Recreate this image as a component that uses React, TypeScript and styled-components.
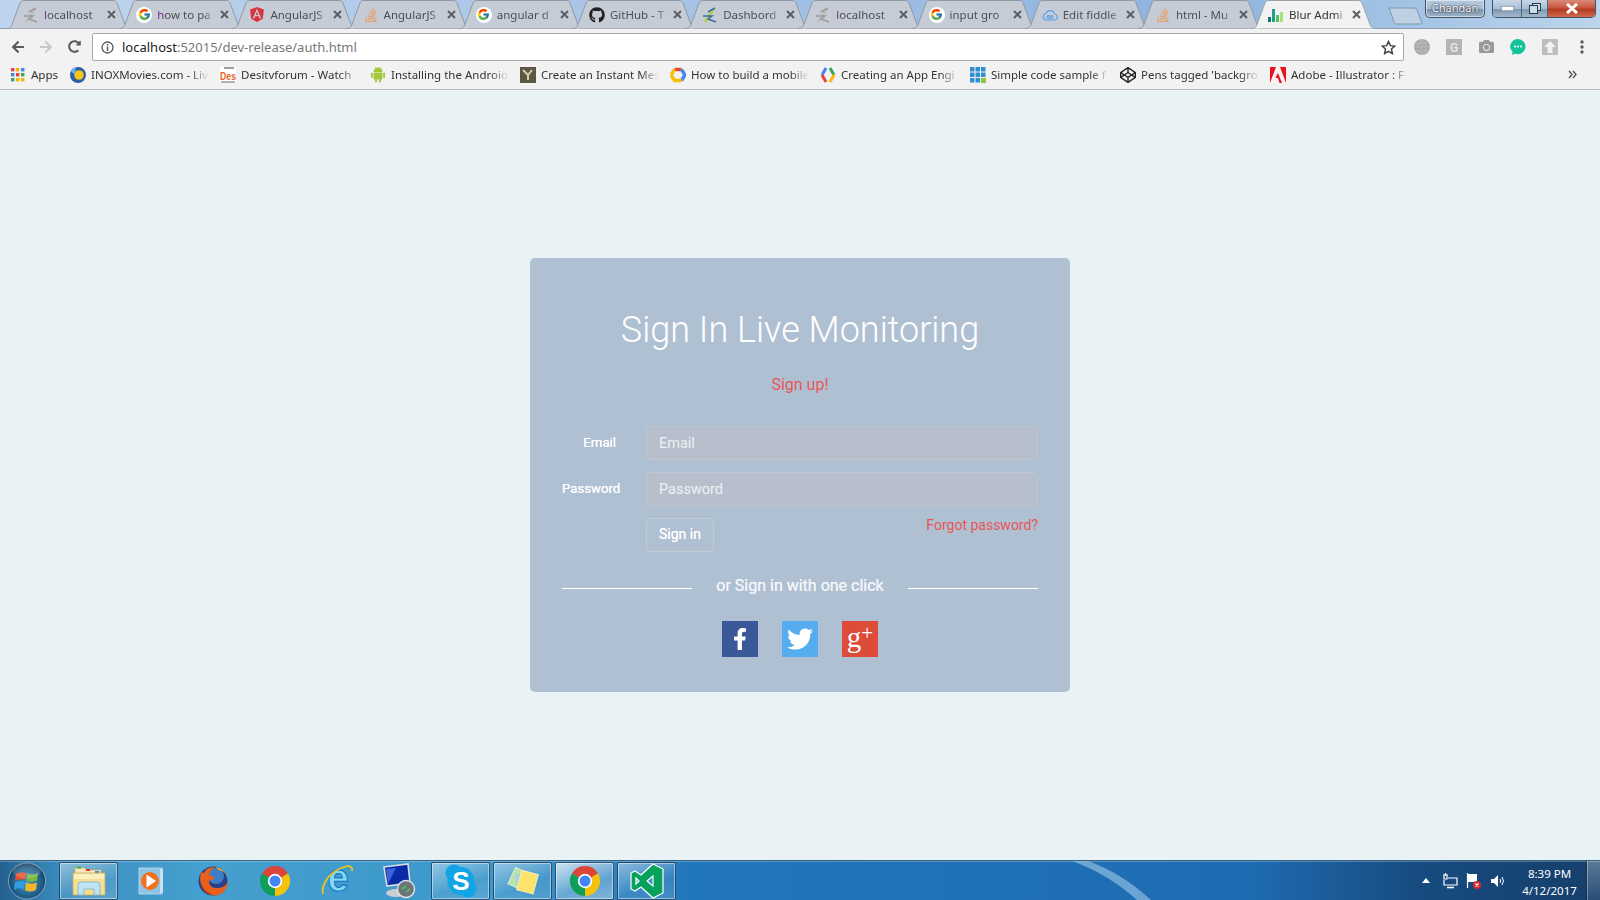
import React from "react";
import styled, { createGlobalStyle } from "styled-components";
import { FcGoogle } from "react-icons/fc";
import {
  FaAngular, FaStackOverflow, FaGithub, FaCodepen, FaFacebookF, FaTwitter,
  FaCamera, FaArrowLeft, FaArrowRight, FaRedoAlt,
} from "react-icons/fa";

const UI = `"Noto Sans", "Open Sans", sans-serif`;
const RB = `Roboto, "Liberation Sans", sans-serif`;

const Global = createGlobalStyle`
  html, body { margin: 0; padding: 0; height: 100%; }
  body { font-family: ${UI}; background: #e9f3f6; overflow: hidden; }
  * { box-sizing: border-box; }
`;

const Page = styled.div`
  width: 1600px; height: 900px; display: flex; flex-direction: column;
`;

/* ---------- browser chrome ---------- */
const TabStrip = styled.div`
  flex: none; display: flex; align-items: flex-start; padding-left: 6px;
  background: linear-gradient(90deg, #bfd4ee 0%, #a5c2e5 45%, #8fb3de 75%, #a7c6e6 90%, #bcd5ec 100%);
  border-bottom: 1px solid #8f9aa6; height: 29px;
`;
const TabBox = styled.div<{ $active?: boolean }>`
  position: relative; width: 125.2px; margin-right: -12px; height: 29px; flex: none;
  display: flex; align-items: center; padding: 0 0 0 17px; gap: 5px;
  z-index: ${(p) => (p.$active ? 3 : 1)};
`;
const TabShape = styled.svg`
  position: absolute; left: 0; top: 0; z-index: -1;
`;
const TabTitle = styled.span<{ $tint?: boolean; $active?: boolean }>`
  width: 58px; flex: none; font-size: 11.5px; line-height: 16px; white-space: nowrap; overflow: hidden;
  color: ${(p) => (p.$active ? "#333" : "#4a4f57")};
  -webkit-mask-image: linear-gradient(90deg, #000 80%, transparent 100%);
  mask-image: linear-gradient(90deg, #000 80%, transparent 100%);
  &::first-letter { color: ${(p) => (p.$tint ? "#7a2a8c" : "inherit")}; }
`;
const IconSlot = styled.span`
  width: 16px; height: 16px; flex: none; display: flex; align-items: center; justify-content: center;
`;
const GoogleBadge = styled.span`
  width: 16px; height: 16px; flex: none; border-radius: 50%; background: #fff;
  display: flex; align-items: center; justify-content: center;
`;
const CloseMark = styled.svg`
  flex: none; margin-left: 0;
`;
const NewTab = styled.svg`
  flex: none; margin: 7px 0 0 24px;
`;
const Caption = styled.div`
  margin-left: auto; display: flex; align-items: flex-start; padding-right: 4px; gap: 7px;
`;
const UserChip = styled.div`
  width: 60px; height: 18px; border: 1px solid #3f5468; border-top: none; border-radius: 0 0 5px 5px;
  background: linear-gradient(180deg, #b7c9dc 0%, #a7bdd3 50%, #7d93ab 55%, #9fb4c8 100%);
  box-shadow: inset 0 0 0 1px rgba(255,255,255,.5);
  font-size: 11px; line-height: 15px; text-align: center; color: #fff;
  text-shadow: 0 0 2px #223, 0 0 1px #223;
`;
const WinButtons = styled.div`
  display: flex; height: 18px; border: 1px solid #3f5468; border-top: none; border-radius: 0 0 5px 5px; overflow: hidden;
  box-shadow: inset 0 0 0 1px rgba(255,255,255,.4);
`;
const WinBtn = styled.div<{ $w: number; $red?: boolean }>`
  width: ${(p) => p.$w}px; display: flex; align-items: center; justify-content: center;
  background: ${(p) =>
    p.$red
      ? "linear-gradient(180deg, #d98a78 0%, #c8563f 45%, #b33a24 55%, #cf6a4a 100%)"
      : "linear-gradient(180deg, #c6d6e6 0%, #a9bfd5 50%, #7f97b1 55%, #a3b9cf 100%)"};
  border-right: ${(p) => (p.$red ? "none" : "1px solid #4f667d")};
`;
const Toolbar = styled.div`
  height: 32px; flex: none; display: flex; align-items: flex-start; background: #f2f2f2; padding: 4px 2px 0 4px;
`;
const NavSlot = styled.span<{ $w?: number }>`
  width: ${(p) => p.$w ?? 28}px; height: 27px; flex: none; display: flex; align-items: center; justify-content: center;
`;
const UrlBox = styled.div`
  flex: 1; height: 28px; margin: 0 2px 0 4px; background: #fff; border: 1px solid #a9a9a9; border-radius: 2px;
  display: flex; align-items: center; padding: 0 7px 0 8px; font-size: 13px; color: #222;
`;
const UrlText = styled.span`
  margin-left: 8px; flex: 1; white-space: nowrap;
  em { font-style: normal; color: #777; }
`;
const Bookmarks = styled.div`
  height: 29px; flex: none; display: flex; align-items: center; padding: 0 0 1px 10px; background: #f2f2f2;
  border-bottom: 1px solid #b4b8bc;
`;
const Mark = styled.div<{ $w: number }>`
  width: ${(p) => p.$w}px; flex: none; display: flex; align-items: center; gap: 5px;
`;
const MarkText = styled.span<{ $fade?: boolean }>`
  font-size: 11.5px; color: #333; white-space: nowrap; overflow: hidden;
  width: ${(p) => (p.$fade ? "118px" : "auto")};
  ${(p) => p.$fade && `-webkit-mask-image: linear-gradient(90deg,#000 84%,transparent 100%); mask-image: linear-gradient(90deg,#000 84%,transparent 100%);`}
`;
const More = styled.svg`
  margin-left: auto; margin-right: 23px; flex: none;
`;

/* ---------- login ---------- */
const Main = styled.main`
  flex: 1; display: flex; align-items: center; justify-content: center; background: #e9f3f6;
`;
const Card = styled.section`
  width: 540px; height: 434px; background: #b0c0d3; border-radius: 5px; padding: 50px 32px 0; font-family: ${RB}; color: #fff;
`;
const Title = styled.h1`
  margin: 0; font-size: 36px; line-height: 44px; font-weight: 300; text-align: center; color: #fff;
`;
const SignUp = styled.a`
  display: block; margin-top: 22px; height: 22px; line-height: 22px; font-size: 16px; text-align: center; color: #e85656;
`;
const Form = styled.form`
  margin-top: 30px; display: grid; grid-template-columns: 84px 1fr; row-gap: 12px;
`;
const FieldLabel = styled.label<{ $inset?: number }>`
  font-size: 13.2px; font-weight: 400; line-height: 33px; height: 34px; color: #fff; text-align: right;
  padding-right: ${(p) => p.$inset ?? 27}px; white-space: nowrap; text-shadow: 0 0 .6px #fff;
`;
const Field = styled.input`
  height: 34px; width: 100%; border: 1px solid #c3c6cc; border-radius: 5px; background: #b6bfcb;
  padding: 0 12px; font: 14.5px ${RB}; color: #fff; outline: none;
  &::placeholder { color: #eef1f4; opacity: 1; }
`;
const Empty = styled.span``;
const Actions = styled.div`
  display: flex; justify-content: space-between; align-items: flex-start;
`;
const SignIn = styled.button`
  width: 68px; height: 34px; border: 1px solid #c6ccd3; border-radius: 5px; background: transparent;
  color: #fff; font: 14px ${RB}; padding: 0 0 2px; text-shadow: 0 0 .6px #fff;
`;
const Forgot = styled.a`
  font-size: 14px; line-height: 14px; color: #e85656; margin-top: 0;
`;
const Divider = styled.div`
  margin-top: 24px; height: 24px; display: flex; align-items: center; justify-content: space-between;
  font-size: 16px; color: #f2f5f8; line-height: 20px;
  &::before, &::after { content: ""; width: 130px; height: 1px; background: #fff; }
`;
const DividerText = styled.span`
  margin-top: -5px; text-shadow: 0 0 .6px #fff;
`;
const Socials = styled.div`
  margin-top: 21px; display: flex; justify-content: center; gap: 24px;
`;
const Social = styled.a<{ $bg: string }>`
  width: 36px; height: 36px; background: ${(p) => p.$bg}; display: flex; align-items: center; justify-content: center; color: #fff;
`;
const GPlus = styled.span`
  font: 29px/30px "Liberation Serif", serif; color: #fff; margin-top: -5px;
  sup { font-size: 21px; line-height: 0; vertical-align: 7px; }
`;

/* ---------- taskbar ---------- */
const Taskbar = styled.footer`
  position: relative; height: 40px; flex: none; display: flex; align-items: stretch; overflow: hidden;
  border-top: 1px solid #33617f; box-shadow: inset 0 1px 0 rgba(255,255,255,.25);
  background: linear-gradient(90deg, #24608f 0, #3a8cbe 60px, #45a0cf 200px, #3c97cb 500px, #2276ba 690px, #1e6bb1 1250px, #174b7f 1420px, #163f6b 1600px);
`;
const Streak = styled.svg`
  position: absolute; left: 1060px; top: 0;
`;
const StartSlot = styled.div`
  width: 59px; flex: none; display: flex; align-items: center; padding-left: 7px;
`;
const TaskItems = styled.div`
  display: flex; gap: 3px; padding: 0; align-items: stretch; position: relative;
`;
const TaskItem = styled.div<{ $boxed?: boolean; $active?: boolean }>`
  width: 59px; display: flex; align-items: center; justify-content: center; border-radius: 2px; margin-top: 1px;
  border: 1px solid ${(p) => (p.$boxed ? "rgba(20,50,80,.75)" : "transparent")};
  box-shadow: ${(p) => (p.$boxed ? "inset 0 0 0 1px rgba(255,255,255,.45)" : "none")};
  background: ${(p) =>
    p.$active
      ? "linear-gradient(160deg, rgba(255,255,255,.75), rgba(255,255,255,.25) 60%, rgba(255,255,255,.4))"
      : p.$boxed
      ? "linear-gradient(160deg, rgba(255,255,255,.45), rgba(255,255,255,.08) 60%, rgba(255,255,255,.15))"
      : "none"};
`;
const Tray = styled.div`
  margin-left: auto; display: flex; align-items: center; position: relative;
`;
const TraySlot = styled.span`
  width: 24px; display: flex; justify-content: center; align-items: center;
`;
const Clock = styled.div`
  width: 76px; text-align: center; color: #fff; font-size: 11.5px; line-height: 17px; font-family: "Noto Sans", sans-serif;
  padding: 2px 0 0 3px;
`;
const ShowDesktop = styled.div`
  width: 14px; align-self: stretch; border: 1px solid rgba(10,30,50,.7); border-width: 0 0 0 1px;
  background: linear-gradient(180deg, rgba(255,255,255,.3), rgba(255,255,255,.08));
  box-shadow: inset 1px 0 0 rgba(255,255,255,.35);
`;

/* ---------- drawn icons ---------- */
const Zee = ({ a = "#9a9a9a", b = "#bdbdbd" }: { a?: string; b?: string }) => (
  <svg width="16" height="16" viewBox="0 0 16 16" fill="none">
    <path d="M3 15 L12 2" stroke={b} strokeWidth="2.4" />
    <path d="M1 9 H10 L6 12 L14 15" stroke={a} strokeWidth="1.5" />
    <path d="M6 5 L13 1" stroke={a} strokeWidth="1.5" />
  </svg>
);
const GoogleIcon = () => (
  <GoogleBadge><FcGoogle size={13} /></GoogleBadge>
);
const CloudIcon = () => (
  <svg width="16" height="16" viewBox="0 0 16 16" fill="none" stroke="#5aa3e8" strokeWidth="1.2">
    <path d="M4 13 H12 A3 3 0 0 0 12.6 7 A4.5 4.5 0 0 0 4 6.5 A3.3 3.3 0 0 0 4 13Z" />
    <circle cx="6.4" cy="10" r="1.4" /><circle cx="9.4" cy="10" r="1.4" />
  </svg>
);
const BarsIcon = () => (
  <svg width="16" height="16" viewBox="0 0 16 16">
    <rect x="0" y="10" width="3" height="5" fill="#16756f" /><rect x="4" y="2" width="3" height="13" fill="#209e91" />
    <rect x="8" y="8" width="3" height="7" fill="#59c25a" /><rect x="12" y="5" width="3" height="10" fill="#a6e27a" />
  </svg>
);
const X = () => (
  <CloseMark width="9" height="9" viewBox="0 0 9 9"><path d="M1 1 L8 8 M8 1 L1 8" stroke="#5c6066" strokeWidth="2" /></CloseMark>
);
const AppsIcon = () => {
  const c = ["#e8453c", "#f4b400", "#4285f4", "#4285f4", "#e8453c", "#34a853", "#34a853", "#f4b400", "#f4b400"];
  return (
    <svg width="14" height="14" viewBox="0 0 14 14" style={{ margin: "0 1px" }}>
      {c.map((f, i) => <rect key={i} x={(i % 3) * 5} y={Math.floor(i / 3) * 5} width="3.4" height="3.4" fill={f} />)}
    </svg>
  );
};
const InoxIcon = () => (
  <svg width="16" height="16" viewBox="0 0 16 16"><circle cx="8" cy="8" r="8" fill="#2a5fa8" /><circle cx="9" cy="8" r="4.8" fill="#f5c518" /><path d="M1 4 A8 8 0 0 1 6 .3 L5 8Z" fill="#6bb4e8" /></svg>
);
const DesiIcon = () => (
  <svg width="16" height="16" viewBox="0 0 16 16"><rect width="16" height="16" fill="#fff" /><rect x="4" y="0" width="10" height="2" fill="#9aa0a6" /><rect x="1" y="14" width="14" height="2" fill="#b0b4b8" /><text x="0" y="12.5" fontFamily="Liberation Sans, sans-serif" fontWeight="700" fontSize="11.5" textLength="16" lengthAdjust="spacingAndGlyphs" fill="#e8622c">Des</text></svg>
);
const InstantIcon = () => (
  <svg width="16" height="16" viewBox="0 0 16 16"><rect width="16" height="16" fill="#5c5744" /><path d="M3 3 L8 8 L12 3 M8 8 L8 13" stroke="#d8cfa8" strokeWidth="2" fill="none" /></svg>
);
const AndroidIcon = () => (
  <svg width="16" height="17" viewBox="0 0 16 17" fill="#a4c639">
    <path d="M3.5 6 A4.5 4.5 0 0 1 12.5 6Z" />
    <path d="M5 1 L6.2 2.6 M11 1 L9.8 2.6" stroke="#a4c639" strokeWidth=".8" />
    <rect x="3.5" y="6.6" width="9" height="7" rx="1" />
    <rect x="1" y="6.6" width="1.8" height="5.4" rx=".9" /><rect x="13.2" y="6.6" width="1.8" height="5.4" rx=".9" />
    <rect x="5" y="13" width="2" height="3.6" rx="1" /><rect x="9" y="13" width="2" height="3.6" rx="1" />
  </svg>
);
const HexIcon = () => (
  <svg width="16" height="16" viewBox="0 0 16 16" fill="none" strokeWidth="3.4">
    <path d="M4.5 2.5 H11.5" stroke="#ea4335" /><path d="M11.5 2.5 L15 8 L11.5 13.5" stroke="#4285f4" /><path d="M11.5 13.5 H4.5 L1 8" stroke="#fbbc05" /><path d="M1 8 L4.5 2.5" stroke="#fbbc05" />
  </svg>
);
const EngineIcon = () => (
  <svg width="16" height="18" viewBox="0 0 16 18" fill="none" strokeWidth="3">
    <path d="M6 2 L2 9" stroke="#4285f4" /><path d="M2 9 L6 16" stroke="#ea4335" /><path d="M10 2 L14 9" stroke="#34a853" /><path d="M14 9 L10 16" stroke="#fbbc05" />
  </svg>
);
const GridIcon = () => (
  <svg width="16" height="16" viewBox="0 0 16 16">
    {[0, 1, 2, 3, 4, 5, 6, 7].map((i) => <rect key={i} x={(i % 3) * 5.5} y={Math.floor(i / 3) * 5.5} width="4.5" height="4.5" fill="#2f8fd0" />)}
    <rect x="11" y="11" width="5" height="5" fill="#8cc63f" />
  </svg>
);
const AdobeIcon = () => (
  <svg width="16" height="16" viewBox="0 0 16 16"><rect width="16" height="16" fill="#e5121b" /><path d="M6 0 H10 L16 16 H12 L8 6 L5.5 11 H8 L9.5 16 H0 Z" fill="#fff" opacity=".95" /></svg>
);
const GlobeExt = () => (
  <svg width="16" height="16" viewBox="0 0 16 16" fill="none"><circle cx="8" cy="8" r="8" fill="#a8a8a8" /><path d="M0 8 H16 M1.5 4 H14.5 M1.5 12 H14.5 M8 0 V16 M8 0 C3 4 3 12 8 16 M8 0 C13 4 13 12 8 16" stroke="#bdbdbd" strokeWidth=".8" /></svg>
);
const GExt = () => (
  <svg width="16" height="16" viewBox="0 0 16 16"><rect width="16" height="16" fill="#b4b4b4" /><text x="8" y="12.5" textAnchor="middle" fontFamily="Roboto, sans-serif" fontWeight="500" fontSize="12" fill="#e9e9e9">G</text></svg>
);
const ChatExt = () => (
  <svg width="16" height="16" viewBox="0 0 16 16"><path d="M8 0 A8 7.6 0 1 1 5 14.8 L2 16 L2.6 13 A8 7.6 0 0 1 8 0Z" fill="#15c39a" /><g fill="#fff"><circle cx="5" cy="7.6" r="1" /><circle cx="8" cy="7.6" r="1" /><circle cx="11" cy="7.6" r="1" /></g></svg>
);
const UpExt = () => (
  <svg width="16" height="16" viewBox="0 0 16 16"><rect width="16" height="16" rx="1" fill="#bdbdbd" /><path d="M8 2 L14 8 H10.5 V14 H5.5 V8 H2Z" fill="#f2f2f2" /></svg>
);
const DotsExt = () => (
  <svg width="4" height="14" viewBox="0 0 4 14" fill="#5a5a5a"><circle cx="2" cy="2" r="1.7" /><circle cx="2" cy="7" r="1.7" /><circle cx="2" cy="12" r="1.7" /></svg>
);
const Orb = () => (
  <svg width="40" height="38" viewBox="0 0 40 38">
    <defs>
      <radialGradient id="orb" cx="50%" cy="55%" r="55%"><stop offset="0" stopColor="#3f9ac8" /><stop offset=".75" stopColor="#1c5a86" /><stop offset="1" stopColor="#0f3350" /></radialGradient>
    </defs>
    <ellipse cx="20" cy="19" rx="18.5" ry="18" fill="url(#orb)" stroke="#c3d5e2" strokeOpacity=".6" />
    <path d="M9 12 Q14 9 19 11 L18 18 Q13 16 8 19Z" fill="#e8502c" />
    <path d="M20.5 11 Q25 14 31 11 L30 18.5 Q24 21 19.5 18.5Z" fill="#7ab83a" />
    <path d="M8 20.5 Q13 18 17.8 20 L16.8 27.5 Q12 25 7 28Z" fill="#2f9ee0" />
    <path d="M19 20.5 Q24 23 30 20.5 L29 28 Q23 31 18 28Z" fill="#f4b32c" />
    <ellipse cx="20" cy="9" rx="14" ry="7.5" fill="#fff" opacity=".16" />
  </svg>
);
const Folder = () => (
  <svg width="34" height="32" viewBox="0 0 34 32">
    <path d="M3 3 H13 L14 5 H29 V10 H3Z" fill="#f7e9b8" stroke="#c8ae6a" strokeWidth=".8" />
    <rect x="5" y="1.5" width="4" height="2" fill="#37b24d" /><rect x="14" y="4" width="4" height="2" fill="#d33" /><rect x="23" y="6" width="4" height="2" fill="#3a8ee0" />
    <path d="M1 8 H33 V30 H1Z" fill="#f6e08f" stroke="#c8ae6a" strokeWidth=".8" />
    <path d="M2 9 H32 V14 H2Z" fill="#fbf0bf" />
    <path d="M6 30 V20 Q6 17 9 17 H25 Q28 17 28 20 V30 H22 V24 H12 V30Z" fill="#bfe3f2" stroke="#74b3d3" strokeWidth=".8" />
  </svg>
);
const PlayerIcon = () => (
  <svg width="30" height="30" viewBox="0 0 30 30">
    <rect x="3" y="2" width="23" height="26" fill="#8fc4e4" stroke="#bcdcf0" strokeWidth=".8" />
    <rect x="24" y="3" width="3" height="24" fill="#c6e1f2" />
    <circle cx="14" cy="15" r="9" fill="#f2711c" /><path d="M10.5 8.5 L20 15 L10.5 21.5Z" fill="#fff" />
  </svg>
);
const FoxIcon = () => (
  <svg width="32" height="34" viewBox="0 0 32 34">
    <circle cx="16" cy="17" r="14.5" fill="#2a3f86" />
    <circle cx="19" cy="12" r="8" fill="#3b7dc6" />
    <path d="M4 8 Q1 20 8 27 Q15 34 24 30 Q31 25 31 17 Q29 23 22 24 Q12 25 12 17 Q15 15 18 15 Q15 11 12 11 Q13 6 18 3 Q9 3 7 9Z" fill="#e8601c" />
    <path d="M18 3 Q27 4 31 14 Q28 7 22 6Z" fill="#f6a723" />
    <path d="M4 18 Q6 27 15 30 Q8 30 5 24Z" fill="#c23a12" />
  </svg>
);
const ChromeLogo = ({ size }: { size: number }) => (
  <svg width={size} height={size} viewBox="0 0 48 48">
    <path d="M24 24 L3.2 12 A24 24 0 0 1 44.8 12Z" fill="#db4437" />
    <path d="M24 24 L44.8 12 A24 24 0 0 1 24 48Z" fill="#f4c20d" />
    <path d="M24 24 L24 48 A24 24 0 0 1 3.2 12Z" fill="#0f9d58" />
    <circle cx="24" cy="24" r="11.5" fill="#fff" /><circle cx="24" cy="24" r="8.8" fill="#4285f4" />
  </svg>
);
const IeIcon = () => (
  <svg width="34" height="34" viewBox="0 0 34 34">
    <text x="18" y="27" textAnchor="middle" fontFamily="Liberation Sans, sans-serif" fontWeight="700" fontSize="38" fill="#86d8f7" stroke="#1273bd" strokeWidth="1">e</text>
    <path d="M3 30 C1 22 8 8 24 3 C30 1 33 3 32 7" fill="none" stroke="#e9c21f" strokeWidth="1.8" />
  </svg>
);
const RdpIcon = () => (
  <svg width="34" height="36" viewBox="0 0 34 36">
    <path d="M2 4 L26 1 L28 20 L5 23Z" fill="#0a2aa8" stroke="#d7dde3" strokeWidth="1.6" />
    <path d="M4 6 L14 5 L6 21Z" fill="#3e63d8" />
    <ellipse cx="14" cy="30" rx="10" ry="4" fill="#c9ced3" />
    <circle cx="24" cy="26" r="8.5" fill="#6d7479" stroke="#dfe3e6" strokeWidth="1.4" />
    <path d="M20 26 L24 23 M28 26 L24 29" stroke="#49c25a" strokeWidth="2" />
  </svg>
);
const SkypeIcon = () => (
  <svg width="32" height="34" viewBox="0 0 32 34">
    <circle cx="9" cy="9" r="8.5" fill="#12a5e6" /><circle cx="23" cy="25" r="8.5" fill="#12a5e6" />
    <ellipse cx="16" cy="17" rx="13.5" ry="14" fill="#12a5e6" />
    <text x="16" y="26" textAnchor="middle" fontFamily="Liberation Sans, sans-serif" fontWeight="700" fontSize="26" fill="#fff">S</text>
  </svg>
);
const NotesIcon = () => (
  <svg width="34" height="30" viewBox="0 0 34 30">
    <rect x="5" y="4" width="16" height="18" transform="rotate(25 13 13)" fill="#b9e3a8" stroke="#d9f0cf" />
    <rect x="10" y="8" width="12" height="16" transform="rotate(-6 15 15)" fill="#a4cfe9" opacity=".9" />
    <rect x="13" y="6" width="17" height="20" transform="rotate(15 21 16)" fill="#fde36a" stroke="#f3f0c0" />
  </svg>
);
const CodeIcon = () => (
  <svg width="34" height="36" viewBox="0 0 34 36">
    <path fillRule="evenodd" d="M23 1 L33 6 V30 L23 35 L11 24 L5 28 L1 26 V10 L5 8 L11 12Z M23 13 L17 18 L23 23Z M6 15 V21 L9 18Z" fill="#06a25c" stroke="#fff" strokeWidth="1.2" />
  </svg>
);

const TABS = [
  { t: "localhost", i: <Zee />, tint: true },
  { t: "how to pa", i: <GoogleIcon />, tint: true },
  { t: "AngularJS", i: <FaAngular size={17} color="#d9333f" /> },
  { t: "AngularJS", i: <FaStackOverflow size={16} color="#e6a26c" /> },
  { t: "angular d", i: <GoogleIcon /> },
  { t: "GitHub - T", i: <FaGithub size={16} color="#222" /> },
  { t: "Dashbord", i: <Zee a="#3a6ea5" b="#b7cf3c" /> },
  { t: "localhost", i: <Zee />, tint: true },
  { t: "input gro", i: <GoogleIcon /> },
  { t: "Edit fiddle", i: <CloudIcon /> },
  { t: "html - Mu", i: <FaStackOverflow size={16} color="#e6a26c" /> },
  { t: "Blur Admi", i: <BarsIcon />, active: true },
];
const MARKS = [
  { t: "INOXMovies.com - Liv", i: <InoxIcon /> },
  { t: "Desitvforum - Watch", i: <DesiIcon /> },
  { t: "Installing the Android", i: <AndroidIcon /> },
  { t: "Create an Instant Mes", i: <InstantIcon /> },
  { t: "How to build a mobile", i: <HexIcon /> },
  { t: "Creating an App Engi", i: <EngineIcon /> },
  { t: "Simple code sample f", i: <GridIcon /> },
  { t: "Pens tagged 'backgro", i: <FaCodepen size={16} color="#222" /> },
  { t: "Adobe - Illustrator : F", i: <AdobeIcon /> },
];

export default function App() {
  return (
    <Page>
      <Global />
      <TabStrip>
        {TABS.map((x, n) => (
          <TabBox key={n} $active={x.active}>
            <TabShape width="125" height="29" viewBox="0 0 125 29">
              <path d="M0 28.5 C4 28.5 5 27 6 24.5 L14 3 C15 1 16 .5 18 .5 L107 .5 C109 .5 110 1 111 3 L119 24.5 C120 27 121 28.5 125 28.5"
                fill={x.active ? "#f2f2f2" : "#c5ccd5"} stroke={x.active ? "#9aa3ac" : "#8f9aa6"} />
            </TabShape>
            <IconSlot>{x.i}</IconSlot>
            <TabTitle $tint={x.tint} $active={x.active}>{x.t}</TabTitle>
            <X />
          </TabBox>
        ))}
        <NewTab width="36" height="18" viewBox="0 0 36 18">
          <path d="M1 1 H26 Q28 1 29 3 L34 16 Q34 17 32 17 H9 Q7 17 6 15Z" fill="#bfd0e2" stroke="#7f98b4" />
        </NewTab>
        <Caption>
          <UserChip>Chandan</UserChip>
          <WinButtons>
            <WinBtn $w={29}><svg width="13" height="5"><rect width="13" height="5" fill="#fff" stroke="#4a5d70" /></svg></WinBtn>
            <WinBtn $w={26}><svg width="12" height="11" fill="none" stroke="#263a4e"><rect x="3.5" y=".5" width="8" height="7" fill="#cfdbe6" /><rect x=".5" y="2.5" width="8" height="8" fill="#cfdbe6" /></svg></WinBtn>
            <WinBtn $w={47} $red><svg width="14" height="11"><path d="M2 1 L12 10 M12 1 L2 10" stroke="#fff" strokeWidth="3" /></svg></WinBtn>
          </WinButtons>
        </Caption>
      </TabStrip>

      <Toolbar>
        <NavSlot><FaArrowLeft size={14} color="#5a5a5a" /></NavSlot>
        <NavSlot><FaArrowRight size={14} color="#c9c9c9" /></NavSlot>
        <NavSlot><FaRedoAlt size={13} color="#5a5a5a" /></NavSlot>
        <UrlBox>
          <svg width="13" height="13" viewBox="0 0 13 13" fill="none"><circle cx="6.5" cy="6.5" r="5.5" stroke="#555" strokeWidth="1.3" /><path d="M6.5 5.5 V10 M6.5 3 V4.4" stroke="#555" strokeWidth="1.5" /></svg>
          <UrlText>localhost<em>:52015/dev-release/auth.html</em></UrlText>
          <svg width="15" height="15" viewBox="0 0 24 24" fill="none" stroke="#444" strokeWidth="2.4"><path d="M12 2.5 L15 9 L22 9.8 L16.8 14.5 L18.2 21.5 L12 18 L5.8 21.5 L7.2 14.5 L2 9.8 L9 9Z" /></svg>
        </UrlBox>
        <NavSlot $w={32}><GlobeExt /></NavSlot>
        <NavSlot $w={32}><GExt /></NavSlot>
        <NavSlot $w={32}><FaCamera size={15} color="#9a9a9a" /></NavSlot>
        <NavSlot $w={32}><ChatExt /></NavSlot>
        <NavSlot $w={32}><UpExt /></NavSlot>
        <NavSlot $w={32}><DotsExt /></NavSlot>
      </Toolbar>

      <Bookmarks>
        <Mark $w={60}><AppsIcon /><MarkText>Apps</MarkText></Mark>
        {MARKS.map((m, i) => (
          <Mark key={i} $w={150}><IconSlot>{m.i}</IconSlot><MarkText $fade>{m.t}</MarkText></Mark>
        ))}
        <More width="9" height="9" viewBox="0 0 9 9" fill="none" stroke="#555" strokeWidth="1.4"><path d="M1 1 L4 4.5 L1 8 M5 1 L8 4.5 L5 8" /></More>
      </Bookmarks>

      <Main>
        <Card>
          <Title>Sign In Live Monitoring</Title>
          <SignUp>Sign up!</SignUp>
          <Form>
            <FieldLabel $inset={30}>Email</FieldLabel>
            <Field placeholder="Email" />
            <FieldLabel>Password</FieldLabel>
            <Field placeholder="Password" />
            <Empty />
            <Actions>
              <SignIn type="button">Sign in</SignIn>
              <Forgot>Forgot password?</Forgot>
            </Actions>
          </Form>
          <Divider><DividerText>or Sign in with one click</DividerText></Divider>
          <Socials>
            <Social $bg="#3b5998"><FaFacebookF size={22} /></Social>
            <Social $bg="#55acee"><FaTwitter size={26} /></Social>
            <Social $bg="#dd4b39"><GPlus>g<sup>+</sup></GPlus></Social>
          </Socials>
        </Card>
      </Main>

      <Taskbar>
        <Streak width="100" height="40" viewBox="0 0 100 40">
          <path d="M12 0 Q50 14 78 40 L92 40 Q62 12 28 0Z" fill="#9cc9ea" opacity=".6" />
        </Streak>
        <StartSlot><Orb /></StartSlot>
        <TaskItems>
          <TaskItem $boxed><Folder /></TaskItem>
          <TaskItem><PlayerIcon /></TaskItem>
          <TaskItem><FoxIcon /></TaskItem>
          <TaskItem><ChromeLogo size={30} /></TaskItem>
          <TaskItem><IeIcon /></TaskItem>
          <TaskItem><RdpIcon /></TaskItem>
          <TaskItem $boxed><SkypeIcon /></TaskItem>
          <TaskItem $boxed><NotesIcon /></TaskItem>
          <TaskItem $boxed $active><ChromeLogo size={30} /></TaskItem>
          <TaskItem $boxed><CodeIcon /></TaskItem>
        </TaskItems>
        <Tray>
          <TraySlot><svg width="8" height="5"><path d="M0 5 L4 0 L8 5Z" fill="#fff" /></svg></TraySlot>
          <TraySlot><svg width="16" height="16" viewBox="0 0 16 16" fill="none" stroke="#fff" strokeWidth="1.2"><path d="M2 1 V6 H5 V1 M3.5 0 V3" /><path d="M6 5 H15 V12 H2 V7" /><path d="M5 14.5 H12" strokeWidth="1.6" /></svg></TraySlot>
          <TraySlot><svg width="16" height="18" viewBox="0 0 16 18"><path d="M1.5 1 V16" stroke="#fff" strokeWidth="1.2" /><path d="M2 2 H11 V10 H2Z" fill="#fff" /><circle cx="11" cy="13" r="4" fill="#d8232a" /><path d="M9.5 11.5 L12.5 14.5 M12.5 11.5 L9.5 14.5" stroke="#fff" strokeWidth="1.1" /></svg></TraySlot>
          <TraySlot><svg width="16" height="16" viewBox="0 0 16 16" fill="none" stroke="#fff"><path d="M1 6 H4 L8 2 V14 L4 10 H1Z" fill="#fff" stroke="none" /><path d="M10 6 Q11.5 8 10 10 M12 4 Q15 8 12 12" strokeWidth="1" /></svg></TraySlot>
          <Clock>8:39 PM<br />4/12/2017</Clock>
          <ShowDesktop />
        </Tray>
      </Taskbar>
    </Page>
  );
}
